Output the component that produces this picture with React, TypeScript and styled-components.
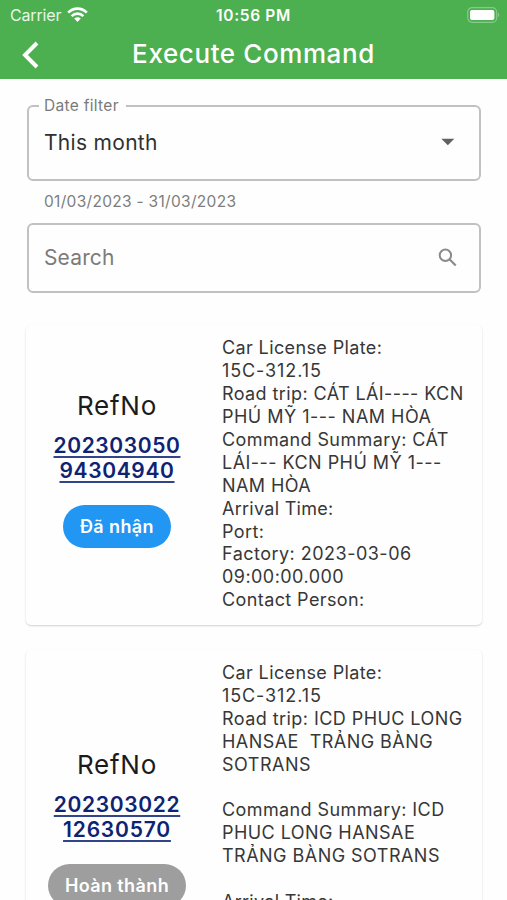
import React from "react";
import styled, { createGlobalStyle } from "styled-components";

const GlobalStyle = createGlobalStyle`
  * { box-sizing: border-box; }
  html, body { margin: 0; background: #fefefe; }
  body { height: 900px; overflow: hidden; font-family: Inter, "Noto Sans", sans-serif; }
`;

const Screen = styled.main`
  width: 507px;
  height: 900px;
  overflow: hidden;
  background: #fefefe;
`;

const Header = styled.header`
  height: 79px;
  background: #4caf50;
  color: #fff;
`;

const StatusBar = styled.div`
  display: grid;
  grid-template-columns: 1fr auto 1fr;
  align-items: center;
  height: 29px;
  padding: 0 7px 0 10px;
`;

const Carrier = styled.div`
  display: flex;
  align-items: center;
  gap: 6px;
  font-size: 16px;
  letter-spacing: -0.15px;
  color: #e9f7e9;
`;

const Clock = styled.div`
  padding: 1px 3px 0 0;
  font-size: 15.5px;
  font-weight: 600;
  letter-spacing: 0.65px;
`;

const Battery = styled.div`
  display: flex;
  justify-content: flex-end;
`;

const NavBar = styled.div`
  display: grid;
  grid-template-columns: 60px 1fr 60px;
  align-items: center;
  height: 50px;
`;

const BackButton = styled.button`
  display: flex;
  padding: 2px 0 0 21px;
  border: 0;
  background: none;
  color: inherit;
`;

const Title = styled.h1`
  margin: 0 0 2px;
  text-align: center;
  font-size: 26px;
  font-weight: 500;
  letter-spacing: 0.6px;
  white-space: nowrap;
`;

const Filters = styled.section`
  padding: 26px 26px 0 27px;
`;

const Field = styled.div<{ $height: number }>`
  position: relative;
  display: flex;
  align-items: center;
  justify-content: space-between;
  height: ${(p) => p.$height}px;
  padding: 0 22px 2px 15px;
  border: 2px solid #c1c1c1;
  border-radius: 6px;
`;

const FloatingLabel = styled.span`
  position: absolute;
  left: 10px;
  top: -11px;
  padding: 0 7px 0 5px;
  background: #fefefe;
  color: #7a7a7a;
  font-size: 15.5px;
  line-height: 20px;
  letter-spacing: 0.3px;
`;

const FieldText = styled.span<{ $muted?: boolean }>`
  color: ${(p) => (p.$muted ? "#7b7b7b" : "#303030")};
  font-size: 21px;
  letter-spacing: ${(p) => (p.$muted ? 0.15 : 0.3)}px;
`;

const Helper = styled.div`
  height: 42px;
  padding: 10px 17px 0;
  color: #7d7d7d;
  font-size: 15.5px;
  line-height: 22px;
  letter-spacing: 0.3px;
`;

const CardList = styled.section`
  display: flex;
  flex-direction: column;
  gap: 24px;
  padding: 32px 25px 0 26px;
`;

const Card = styled.article`
  display: grid;
  grid-template-columns: 182px 1fr;
  padding: 12.4px 0 12.8px;
  border-radius: 5px;
  background: #fefefe;
  box-shadow: 0 1px 2px rgba(0, 0, 0, 0.18);

  & + & {
    margin-top: 0.8px;
  }
`;

const Reference = styled.div`
  display: flex;
  flex-direction: column;
  align-items: center;
  justify-content: center;
  padding-bottom: 11.5px;
`;

const RefTitle = styled.div`
  color: #1b1b1b;
  font-size: 26px;
  line-height: 32px;
  letter-spacing: 0.75px;
`;

const RefLink = styled.a`
  display: flex;
  flex-direction: column;
  align-items: center;
  margin-top: 11px;
  color: #0e2372;
  font-size: 21px;
  font-weight: 600;
  line-height: 25.5px;
`;

const RefLine = styled.span<{ $spacing: number }>`
  text-decoration: underline;
  text-decoration-color: #33458a;
  text-decoration-thickness: 2px;
  text-underline-offset: 3px;
  text-decoration-skip-ink: none;
  letter-spacing: ${(p) => p.$spacing}px;
`;

const Status = styled.div<{ $done?: boolean }>`
  display: grid;
  place-items: center;
  width: ${(p) => (p.$done ? 138 : 108)}px;
  height: 43px;
  margin-top: 21px;
  border-radius: 22px;
  background: ${(p) => (p.$done ? "#9e9e9e" : "#2196f3")};
  color: #fff;
  font-size: 18px;
  font-weight: 600;
  letter-spacing: 0.4px;
`;

const Details = styled.div`
  padding-left: 14px;
  color: #373737;
  font-size: 18px;
  line-height: 22.9px;
`;

const DetailLine = styled.div<{ $spacing: number }>`
  height: 22.9px;
  white-space: pre;
  letter-spacing: ${(p) => p.$spacing}px;
`;

type Line = [text: string, spacing: number];

interface Command {
  ref: Line[];
  status: string;
  done?: boolean;
  details: Line[];
}

const commands: Command[] = [
  {
    ref: [["202303050", 0.6], ["94304940", 0.65]],
    status: "Đã nhận",
    details: [
      ["Car License Plate:", 0.38],
      ["15C-312.15", 0.9],
      ["Road trip: CÁT LÁI---- KCN", 0.4],
      ["PHÚ MỸ 1--- NAM HÒA", 0.48],
      ["Command Summary: CÁT", 0.39],
      ["LÁI--- KCN PHÚ MỸ 1---", 0.46],
      ["NAM HÒA", 0.42],
      ["Arrival Time:", 0.28],
      ["Port:", 0.4],
      ["Factory: 2023-03-06", 0.48],
      ["09:00:00.000", 0.45],
      ["Contact Person:", 0.4],
    ],
  },
  {
    ref: [["202303022", 0.65], ["12630570", 0.8]],
    status: "Hoàn thành",
    done: true,
    details: [
      ["Car License Plate:", 0.38],
      ["15C-312.15", 0.9],
      ["Road trip: ICD PHUC LONG", 0.44],
      ["HANSAE  TRẢNG BÀNG", 0.44],
      ["SOTRANS", 0.5],
      ["", 0],
      ["Command Summary: ICD", 0.4],
      ["PHUC LONG HANSAE", 0.44],
      ["TRẢNG BÀNG SOTRANS", 0.47],
      ["", 0],
      ["Arrival Time:", 0.28],
      ["Port:", 0.4],
      ["Factory: 2023-03-02", 0.48],
      ["09:00:00.000", 0.45],
      ["Contact Person:", 0.4],
    ],
  },
];

const WifiIcon = () => (
  <svg width="21" height="16" viewBox="0 0 21 16" fill="none" stroke="#fff" strokeWidth="2.7">
    <path d="M1.2 5.6C6.5.4 14.5.4 19.8 5.6" />
    <path d="M4.6 9.1c3.4-3.3 8.4-3.3 11.8 0" />
    <path d="M7.2 11.6c2-1.7 4.6-1.7 6.6 0L10.5 15z" fill="#fff" stroke="none" />
  </svg>
);

const BatteryIcon = () => (
  <svg width="33" height="16" viewBox="0 0 33 16">
    <rect x=".7" y=".7" width="29" height="14.6" rx="4.5" fill="none" stroke="#86c989" strokeWidth="1.2" />
    <rect x="3" y="3" width="24.4" height="10" rx="2" fill="#fff" />
    <path d="M31 5.8c1.6.5 1.6 3.9 0 4.4z" fill="#86c989" />
  </svg>
);

const BackIcon = () => (
  <svg width="19" height="28" viewBox="0 0 19 28" fill="none" stroke="#fff" strokeWidth="4">
    <path d="M16 2L4 14l12 12" />
  </svg>
);

const SearchIcon = () => (
  <svg width="19" height="19" viewBox="0 0 19 19" fill="none" stroke="#8b8b8b" strokeWidth="2">
    <circle cx="7.4" cy="7.2" r="5.7" />
    <path d="M11.7 11.5l6 6" strokeWidth="2.2" />
  </svg>
);

const CaretIcon = () => (
  <svg width="19" height="8" viewBox="0 0 19 8">
    <path d="M3.3 .7h13L9.8 7.2z" fill="#616161" />
  </svg>
);

export default function App() {
  return (
    <Screen>
      <GlobalStyle />
      <Header>
        <StatusBar>
          <Carrier>
            Carrier
            <WifiIcon />
          </Carrier>
          <Clock>10:56 PM</Clock>
          <Battery>
            <BatteryIcon />
          </Battery>
        </StatusBar>
        <NavBar>
          <BackButton aria-label="Back">
            <BackIcon />
          </BackButton>
          <Title>Execute Command</Title>
        </NavBar>
      </Header>
      <Filters>
        <Field $height={76}>
          <FloatingLabel>Date filter</FloatingLabel>
          <FieldText>This month</FieldText>
          <CaretIcon />
        </Field>
        <Helper>01/03/2023 - 31/03/2023</Helper>
        <Field $height={70}>
          <FieldText $muted>Search</FieldText>
          <SearchIcon />
        </Field>
      </Filters>
      <CardList>
        {commands.map((command) => (
          <Card key={command.status}>
            <Reference>
              <RefTitle>RefNo</RefTitle>
              <RefLink>
                {command.ref.map(([text, spacing]) => (
                  <RefLine key={text} $spacing={spacing}>{text}</RefLine>
                ))}
              </RefLink>
              <Status $done={command.done}>{command.status}</Status>
            </Reference>
            <Details>
              {command.details.map(([text, spacing], i) => (
                <DetailLine key={i} $spacing={spacing}>{text}</DetailLine>
              ))}
            </Details>
          </Card>
        ))}
      </CardList>
    </Screen>
  );
}
